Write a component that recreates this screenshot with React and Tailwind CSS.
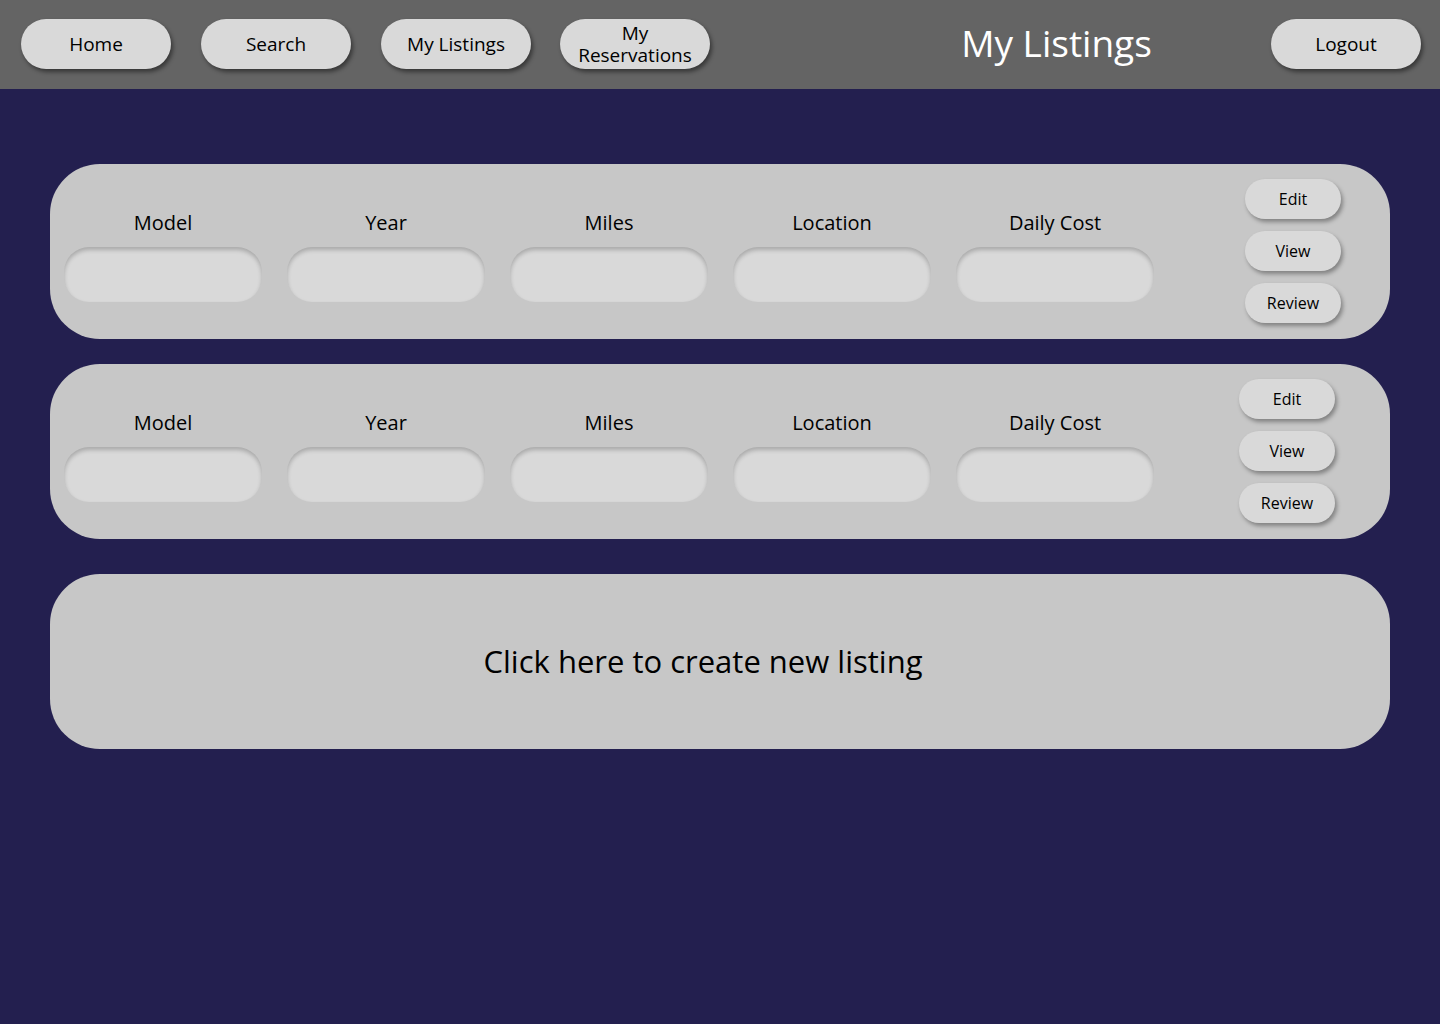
import React from 'react';

const fields = ['Model', 'Year', 'Miles', 'Location', 'Daily Cost'];

function NavButton({ children, tight }) {
  return (
    <button className={`w-[150px] h-[50px] rounded-[25px] bg-[#d9d9d9] text-black text-[19px] shadow-[2px_3px_4px_rgba(0,0,0,0.45)] ${tight ? 'leading-[22px]' : 'leading-[24px]'}`}>
      {children}
    </button>
  );
}

function SmallButton({ children }) {
  return (
    <button className="w-[96px] h-[40px] rounded-[20px] bg-[#d9d9d9] text-black text-[16px] shadow-[2px_3px_4px_rgba(0,0,0,0.35)]">
      {children}
    </button>
  );
}

function ListingCard({ gap }) {
  return (
    <div className="h-[175px] rounded-[50px] bg-[#c7c7c7] flex items-start pl-[14px] pt-[15px]">
      <div className="flex gap-[25px] mt-[30px]">
        {fields.map((f) => (
          <div key={f} className="flex flex-col items-center gap-[10px]">
            <span className="text-[20px] leading-[28px] text-black">{f}</span>
            <div className="w-[198px] h-[55px] rounded-[25px] bg-[#d9d9d9] shadow-[inset_0_3px_4px_rgba(0,0,0,0.22)]" />
          </div>
        ))}
      </div>
      <div className={`flex flex-col gap-[12px] ${gap}`}>
        <SmallButton>Edit</SmallButton>
        <SmallButton>View</SmallButton>
        <SmallButton>Review</SmallButton>
      </div>
    </div>
  );
}

export default function App() {
  return (
    <div className="min-h-[1024px] bg-[#231f4f]" style={{ fontFamily: '"Open Sans", sans-serif' }}>
      <header className="h-[89px] bg-[#646464] flex items-center pl-[21px] pr-[19px]">
        <div className="flex gap-[30px] -mt-[1px]">
          <NavButton>Home</NavButton>
          <NavButton>Search</NavButton>
          <NavButton>My Listings</NavButton>
          <div className="-ml-[1px]">
            <NavButton tight>My<br />Reservations</NavButton>
          </div>
        </div>
        <div className="flex-1 flex justify-center pl-[132px] -mt-[3px]">
          <h1 className="text-white text-[37px] leading-[44px]">My Listings</h1>
        </div>
        <div className="-mt-[1px]">
          <NavButton>Logout</NavButton>
        </div>
      </header>
      <main className="px-[50px] pt-[75px] flex flex-col">
        <ListingCard gap="ml-[91px]" />
        <div className="mt-[25px]">
          <ListingCard gap="ml-[85px]" />
        </div>
        <div className="mt-[35px] h-[175px] rounded-[50px] bg-[#c7c7c7] flex items-center justify-center pr-[34px]">
          <span className="text-black text-[31px]">Click here to create new listing</span>
        </div>
      </main>
    </div>
  );
}
